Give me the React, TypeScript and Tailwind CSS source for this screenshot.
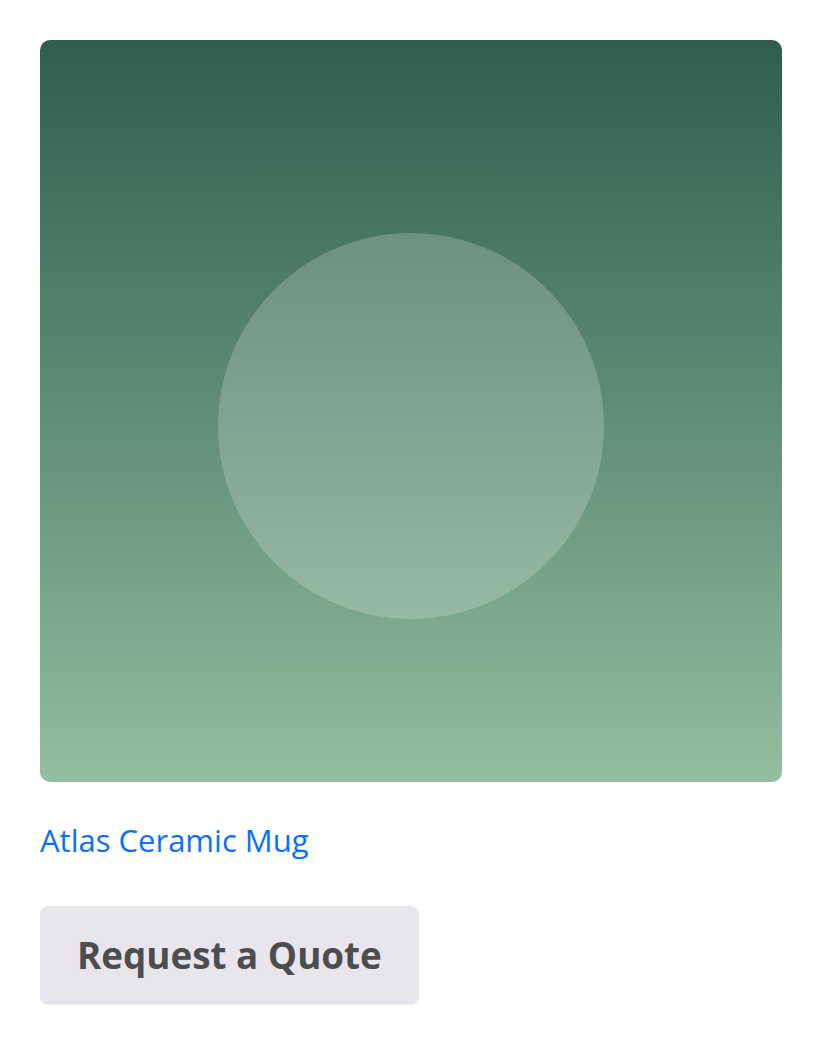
export default function App() {
  return (
    <div className="min-h-screen bg-white p-10 font-['Open_Sans',sans-serif]">
      <div className="relative aspect-square w-full overflow-hidden rounded-[10px] bg-gradient-to-b from-[#2f5e4f] to-[#93bf9e]">
        <div className="absolute left-[24%] top-[26%] aspect-square w-[52%] rounded-full bg-white/20" />
      </div>
      <a href="#" className="mt-[35px] block text-[31px] leading-[1.5] text-[#0d6efd]">
        Atlas Ceramic Mug
      </a>
      <button className="mt-[42px] rounded-[8px] bg-[#e8e6ec] px-[37px] py-[22px] text-[36.8px] font-bold leading-[1.5] text-[#4d4d50]">
        Request a Quote
      </button>
    </div>
  );
}
